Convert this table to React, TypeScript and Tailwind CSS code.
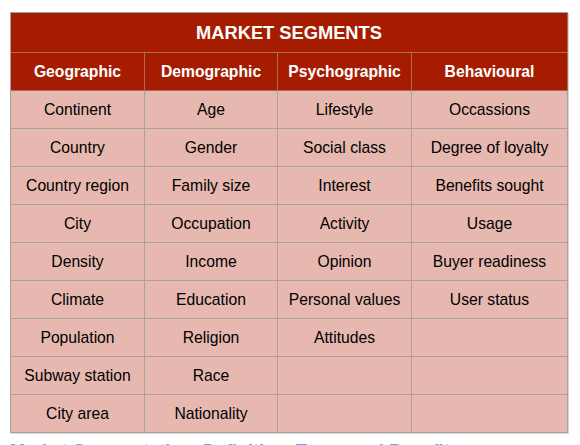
const headers = ['Geographic', 'Demographic', 'Psychographic', 'Behavioural'];

const rows: string[][] = [
  ['Continent', 'Age', 'Lifestyle', 'Occassions'],
  ['Country', 'Gender', 'Social class', 'Degree of loyalty'],
  ['Country region', 'Family size', 'Interest', 'Benefits sought'],
  ['City', 'Occupation', 'Activity', 'Usage'],
  ['Density', 'Income', 'Opinion', 'Buyer readiness'],
  ['Climate', 'Education', 'Personal values', 'User status'],
  ['Population', 'Religion', 'Attitudes', ''],
  ['Subway station', 'Race', '', ''],
  ['City area', 'Nationality', '', ''],
];

const App = () => {
  return (
    <div className="h-[445px] bg-white pt-3 pl-[10px] font-['Liberation_Sans',Arial,sans-serif] overflow-hidden">
      {/* Segments table */}
      <div className="w-[558px] grid grid-cols-[134px_133px_134px_156px] border-l border-t border-[#a3a3a3] shadow-[1px_1px_0_#d6d6d6]">
        <div className="col-span-4 h-10 flex items-center justify-center bg-[#a61c00] border-r border-b border-[#b06a5c] text-white font-bold text-[18.3px]">
          MARKET SEGMENTS
        </div>
        {headers.map((h) => (
          <div
            key={h}
            className="h-[38px] flex items-center justify-center bg-[#a61c00] border-r border-b border-[#b06a5c] text-white font-bold text-[15.7px]"
          >
            {h}
          </div>
        ))}
        {rows.map((row, i) =>
          row.map((cell, j) => (
            <div
              key={`${i}-${j}`}
              className="h-[38px] flex items-center justify-center bg-[#e6b8af] border-r border-b border-[#a9a29f] text-black text-[15.7px]"
            >
              {cell}
            </div>
          ))
        )}
      </div>

      {/* Link underneath, mostly cut off by the window edge */}
      <div className="mt-[8px] h-5 leading-5 text-[18px] font-bold text-[#6d9eeb] whitespace-nowrap">
        Market Segmentation: Definition, Types and Benefits
      </div>
    </div>
  );
};

export default App;
